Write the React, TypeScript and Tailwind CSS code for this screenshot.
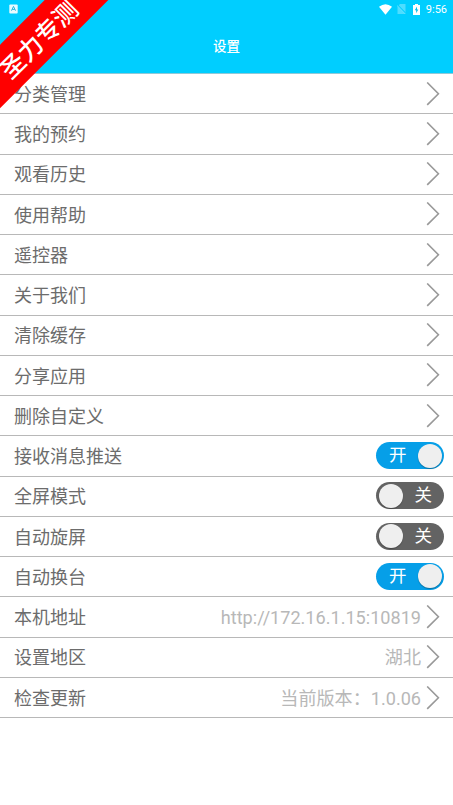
import React, { useState } from 'react';

type Row = {
  label: string;
  value?: string;
  toggle?: boolean;
};

const rows: Row[] = [
  { label: '分类管理' },
  { label: '我的预约' },
  { label: '观看历史' },
  { label: '使用帮助' },
  { label: '遥控器' },
  { label: '关于我们' },
  { label: '清除缓存' },
  { label: '分享应用' },
  { label: '删除自定义' },
  { label: '接收消息推送', toggle: true },
  { label: '全屏模式', toggle: false },
  { label: '自动旋屏', toggle: false },
  { label: '自动换台', toggle: true },
  { label: '本机地址', value: 'http://172.16.1.15:10819' },
  { label: '设置地区', value: '湖北' },
  { label: '检查更新', value: '当前版本：1.0.06' },
];

function Chevron() {
  return (
    <svg className="w-[14px] h-6 shrink-0" viewBox="0 0 14 24" fill="none" stroke="#999999" strokeWidth="1.6">
      <path d="M1.2 0.5 L12.4 11.7 L1.2 22.9" />
    </svg>
  );
}

function Toggle({ initial }: { initial: boolean }) {
  const [on, setOn] = useState(initial);

  return (
    <button
      onClick={() => setOn(!on)}
      className={`relative w-[68px] h-[27px] mb-px rounded-full shrink-0 text-white text-[17.5px] leading-[27px] ${on ? 'bg-[#069fe8] text-left pl-[13px]' : 'bg-[#636363] text-right pr-[12px]'}`}
    >
      <span>{on ? '开' : '关'}</span>
      <span
        className={`absolute top-[1.5px] size-6 rounded-full bg-[#efefef] shadow-[0_1px_1px_rgba(0,0,0,0.3)] ${on ? 'right-[2.5px]' : 'left-[2.5px]'}`}
      />
    </button>
  );
}

function StatusBar() {
  return (
    <div className="flex items-center justify-between h-[18px] pl-[9px] pr-[6px] text-white">
      <svg className="w-[9px] h-[10px]" viewBox="0 0 9 10">
        <rect x="0.3" y="0.5" width="8.4" height="9" rx="1" fill="#e9fbff" />
        <path d="M2.5 6.7 L4.5 2.4 L6.5 6.7 M3.2 5.4 H5.8" fill="none" stroke="#25b5dd" strokeWidth="1" />
      </svg>
      <div className="flex items-center">
        <svg className="w-[13px] h-[11px]" viewBox="0 0 13 11">
          <path d="M0 2.8 Q6.5 -2.2 13 2.8 L6.5 10.8 Z" fill="white" />
        </svg>
        <svg className="w-[9px] h-[10px] ml-[5px]" viewBox="0 0 9 10">
          <path d="M3 0 H8.5 V10 H0.5 V2.5 Z" fill="white" fillOpacity="0.3" />
          <path d="M0 0.5 L9 9.8" stroke="#00ceff" strokeWidth="1.4" />
          <path d="M0 1.3 L8.4 10" stroke="white" strokeOpacity="0.4" strokeWidth="0.8" />
        </svg>
        <svg className="w-[7px] h-[11px] ml-[7px]" viewBox="0 0 7 11">
          <path d="M2 0 H5 V1 H7 V11 H0 V1 H2 Z" fill="white" />
          <path d="M4 2.6 L1.8 6.3 H3.2 V9.2 L5.3 5.4 H4 Z" fill="#00bdea" />
        </svg>
        <span className="ml-[6px] pt-px text-[11px] leading-[18px]">9:56</span>
      </div>
    </div>
  );
}

export default function App() {
  return (
    <div className="relative w-full h-[805px] overflow-hidden bg-white font-[Roboto,'Noto_Sans_CJK_SC',sans-serif]">
      <header className="h-[74px] bg-[#00ceff] border-b border-[#8fc9d8]">
        <StatusBar />
        <h1 className="h-[56px] flex items-center justify-center text-white text-[13.5px] font-medium">设置</h1>
      </header>

      <ul>
        {rows.map((row) => (
          <li
            key={row.label}
            className="flex items-center h-[40.27px] pl-[14px] pr-[9px] border-b border-[#b8b8b8]"
          >
            <span className="flex-1 pt-[2.2px] text-[18px] leading-6 text-[#6c6c6c]">{row.label}</span>
            {row.toggle !== undefined ? (
              <Toggle initial={row.toggle} />
            ) : (
              <div className="flex items-center gap-[5px] pr-[4px]">
                {row.value && <span className="pt-[2.2px] text-[18.1px] leading-6 text-[#b8b8b8]">{row.value}</span>}
                <Chevron />
              </div>
            )}
          </li>
        ))}
      </ul>

      <div className="absolute left-[-62px] top-[15.5px] w-[200px] h-[45px] pt-[5px] -rotate-45 bg-[#ff0000] flex items-center justify-center text-white text-[24.5px] leading-none font-medium">
        圣力专测
      </div>
    </div>
  );
}
